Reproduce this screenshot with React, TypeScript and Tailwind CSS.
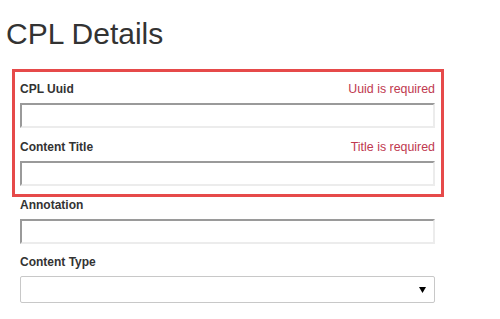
import React from "react";

const font = { fontFamily: '"Liberation Sans", Arial, sans-serif' };

function Label({ label, error }: { label: string; error?: string }) {
  return (
    <div className="flex h-[19px] items-end justify-between text-[12px] leading-[17px]">
      <span className="font-bold text-[#333]">{label}</span>
      {error && <span className="text-[12.4px] text-[#c0394f]">{error}</span>}
    </div>
  );
}

function Field({ label, error }: { label: string; error?: string }) {
  return (
    <div>
      <Label label={label} error={error} />
      <input
        type="text"
        className="mt-[5px] block h-[25px] w-full border-2 border-t-[#9a9a9a] border-l-[#9a9a9a] border-r-[#ececec] border-b-[#ececec] bg-white outline-none"
      />
    </div>
  );
}

export default function App() {
  return (
    <div className="h-[319px] w-[500px] bg-white" style={font}>
      <div className="pl-[6px] pt-[17px]">
        <h1 className="text-[30px] leading-[33px] font-normal text-[#333]">CPL Details</h1>
      </div>
      <div className="mt-[19px] w-[415px] ml-[20px]">
        <div className="-ml-[8px] -mr-[9px] border-[3px] border-[#e64a4a] pt-[7px] pb-[8px] pl-[5px] pr-[6px]">
          <div className="flex flex-col gap-[9px]">
            <Field label="CPL Uuid" error="Uuid is required" />
            <Field label="Content Title" error="Title is required" />
          </div>
        </div>
        <div className="-mt-[2px]">
          <Field label="Annotation" />
        </div>
        <div className="mt-[8px]">
          <Label label="Content Type" />
          <div className="relative mt-[5px] h-[27px] w-full rounded-[2px] border border-[#c8c8c8] bg-white">
            <svg
              className="absolute right-[8px] top-[10px]"
              width="7"
              height="6"
              viewBox="0 0 7 6"
            >
              <path d="M0 0 H7 L3.5 6 Z" fill="#000" />
            </svg>
          </div>
        </div>
      </div>
    </div>
  );
}
